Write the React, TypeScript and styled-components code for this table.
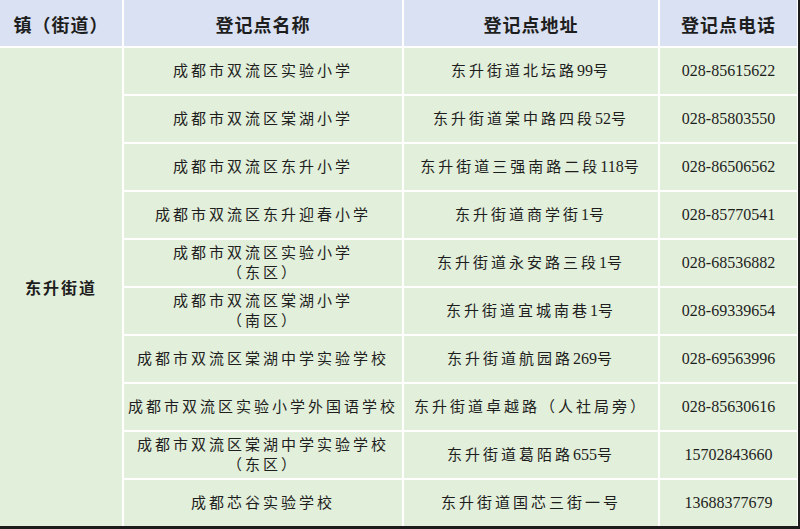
import React from "react";
import styled, { createGlobalStyle } from "styled-components";

const Global = createGlobalStyle`
  html, body { margin: 0; padding: 0; background: #ffffff; }
  body { font-family: "Liberation Serif", "Noto Sans CJK SC", serif; }
`;

const Table = styled.div`
  width: 800px;
  height: 529px;
  box-sizing: border-box;
  display: grid;
  grid-template-columns: 122px 278px 254px 1fr;
  grid-template-rows: repeat(11, 46px);
  gap: 2px;
  background: #ffffff;
  padding-right: 1px;
  border-right: 2px solid #1c1c1c;
  border-bottom: 3px solid #1c1c1c;
  color: #1e1e1e;
`;

const Head = styled.div`
  background: #d9e1f2;
  display: flex;
  align-items: center;
  justify-content: center;
  font-family: "Noto Sans CJK SC", sans-serif;
  font-weight: 700;
  font-size: 18px;
  letter-spacing: 1px;
  padding-top: 1px;
`;

const Town = styled.div`
  grid-column: 1;
  grid-row: 2 / span 10;
  background: #e2efda;
  display: flex;
  align-items: center;
  justify-content: center;
  font-family: "Noto Sans CJK SC", serif;
  font-weight: 700;
  font-size: 16px;
  letter-spacing: 2px;
`;

const Cell = styled.div<{ $phone?: boolean }>`
  background: #e2efda;
  display: flex;
  flex-direction: column;
  align-items: center;
  justify-content: center;
  text-align: center;
  white-space: nowrap;
  font-family: ${(p) =>
    p.$phone ? `"Liberation Serif", serif` : `"Liberation Serif", "Noto Sans CJK SC", serif`};
  font-size: ${(p) => (p.$phone ? "16px" : "15px")};
  letter-spacing: ${(p) => (p.$phone ? "0" : "3px")};
  line-height: 20px;
`;

const Line = styled.span`
  display: block;
`;

const Num = styled.span`
  font-size: 16px;
  letter-spacing: 0;
`;

function withNums(s: string) {
  return s.split(/(\d+)/).map((part, i) =>
    /^\d+$/.test(part) ? <Num key={i}>{part}</Num> : <React.Fragment key={i}>{part}</React.Fragment>
  );
}

const rows: { name: string[]; addr: string; phone: string }[] = [
  { name: ["成都市双流区实验小学"], addr: "东升街道北坛路99号", phone: "028-85615622" },
  { name: ["成都市双流区棠湖小学"], addr: "东升街道棠中路四段52号", phone: "028-85803550" },
  { name: ["成都市双流区东升小学"], addr: "东升街道三强南路二段118号", phone: "028-86506562" },
  { name: ["成都市双流区东升迎春小学"], addr: "东升街道商学街1号", phone: "028-85770541" },
  { name: ["成都市双流区实验小学", "（东区）"], addr: "东升街道永安路三段1号", phone: "028-68536882" },
  { name: ["成都市双流区棠湖小学", "（南区）"], addr: "东升街道宜城南巷1号", phone: "028-69339654" },
  { name: ["成都市双流区棠湖中学实验学校"], addr: "东升街道航园路269号", phone: "028-69563996" },
  { name: ["成都市双流区实验小学外国语学校"], addr: "东升街道卓越路（人社局旁）", phone: "028-85630616" },
  { name: ["成都市双流区棠湖中学实验学校", "（东区）"], addr: "东升街道葛陌路655号", phone: "15702843660" },
  { name: ["成都芯谷实验学校"], addr: "东升街道国芯三街一号", phone: "13688377679" },
];

export default function App() {
  return (
    <>
      <Global />
      <Table>
        <Head>镇（街道）</Head>
        <Head>登记点名称</Head>
        <Head>登记点地址</Head>
        <Head>登记点电话</Head>
        <Town>东升街道</Town>
        {rows.map((r, i) => (
          <React.Fragment key={i}>
            <Cell>
              {r.name.map((l, j) => (
                <Line key={j}>{l}</Line>
              ))}
            </Cell>
            <Cell>
              <Line>{withNums(r.addr)}</Line>
            </Cell>
            <Cell $phone>{r.phone}</Cell>
          </React.Fragment>
        ))}
      </Table>
    </>
  );
}
